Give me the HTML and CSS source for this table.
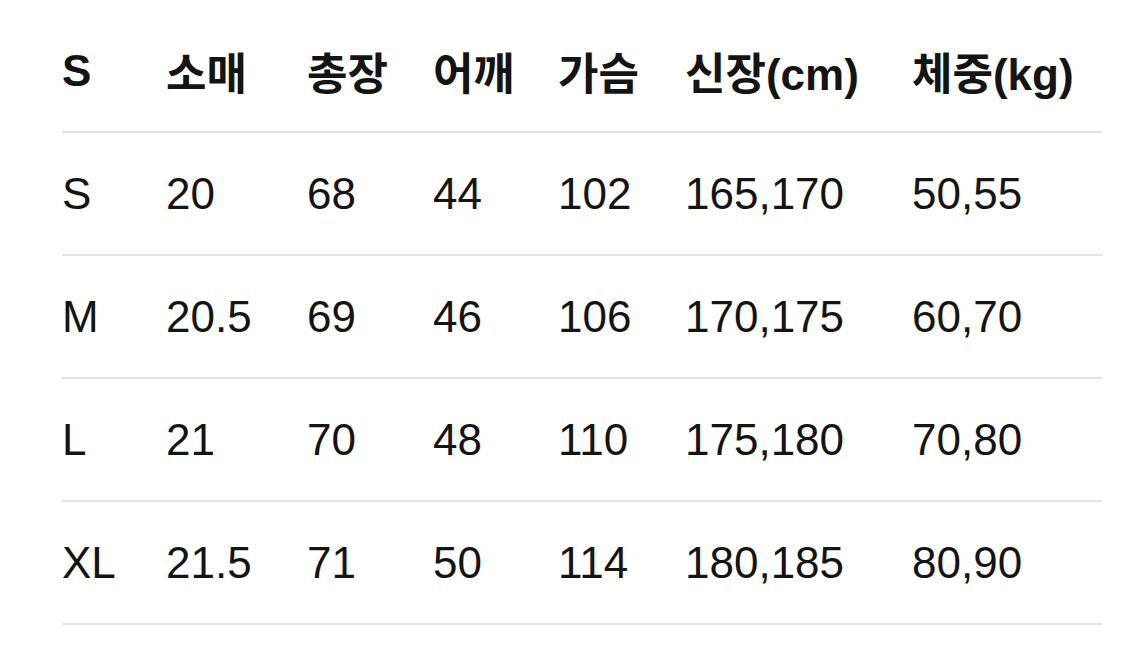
FILE: index.html
```html
<!DOCTYPE html>
<html lang="ko">
<head>
<meta charset="utf-8">
<link rel="stylesheet" href="styles.css">
</head>
<body>
<table class="size-table">
  <colgroup>
    <col class="c1"><col class="c2"><col class="c3"><col class="c4"><col class="c5"><col class="c6"><col class="c7">
  </colgroup>
  <thead>
    <tr><th>S</th><th>소매</th><th>총장</th><th>어깨</th><th>가슴</th><th>신장(cm)</th><th>체중(kg)</th></tr>
  </thead>
  <tbody>
    <tr><td>S</td><td>20</td><td>68</td><td>44</td><td>102</td><td>165,170</td><td>50,55</td></tr>
    <tr><td>M</td><td>20.5</td><td>69</td><td>46</td><td>106</td><td>170,175</td><td>60,70</td></tr>
    <tr><td>L</td><td>21</td><td>70</td><td>48</td><td>110</td><td>175,180</td><td>70,80</td></tr>
    <tr><td>XL</td><td>21.5</td><td>71</td><td>50</td><td>114</td><td>180,185</td><td>80,90</td></tr>
  </tbody>
</table>
</body>
</html>
```
FILE: styles.css
```css
html, body {
  margin: 0;
  padding: 0;
  background: #ffffff;
}
body {
  padding: 10px 23px 0 62px;
  font-family: "Liberation Sans", "Noto Sans CJK KR", sans-serif;
  color: #141414;
}
.size-table {
  border-collapse: collapse;
  table-layout: fixed;
  width: 1040px;
}
.c1 { width: 104px; }
.c2 { width: 141px; }
.c3 { width: 126px; }
.c4 { width: 125px; }
.c5 { width: 127px; }
.c6 { width: 227px; }
.c7 { width: 190px; }
.size-table th,
.size-table td {
  padding: 0;
  height: 121px;
  text-align: left;
  vertical-align: middle;
  font-size: 44px;
  white-space: nowrap;
  border-bottom: 2px solid #e4e4e4;
}
.size-table th {
  font-weight: 700;
}
.size-table td {
  font-weight: 400;
}
```
